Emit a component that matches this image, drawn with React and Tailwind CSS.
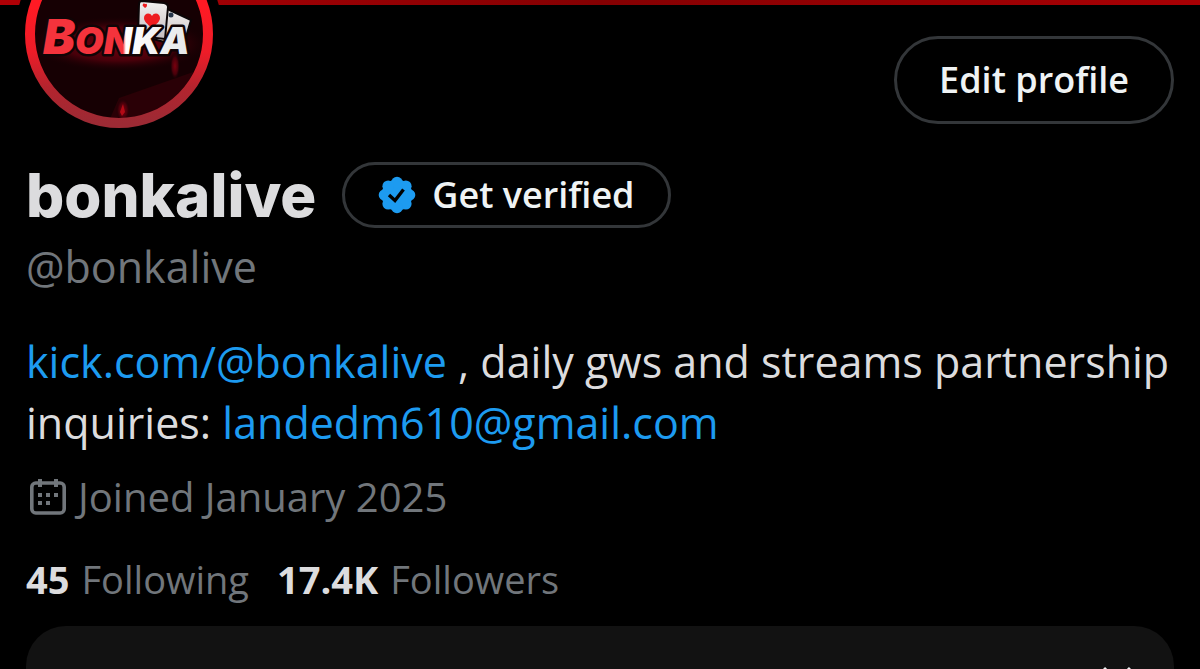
const profile = {
  name: 'bonkalive',
  handle: '@bonkalive',
  site: 'kick.com/@bonkalive',
  email: 'landedm610@gmail.com',
  joined: 'Joined January 2025',
}

const stats = [
  { label: 'Following', value: '45' },
  { label: 'Followers', value: '17.4K' },
]

function Avatar() {
  return (
    <svg viewBox="0 0 208 208" className="w-52 h-52 shrink-0" role="img" aria-label="Bonka">
      <defs>
        <linearGradient id="ring" x1="0" y1="0" x2="0" y2="1">
          <stop offset="0.35" stopColor="#ff1a24" />
          <stop offset="0.6" stopColor="#ee1c28" />
          <stop offset="0.8" stopColor="#b3242e" />
          <stop offset="1" stopColor="#9c2a34" />
        </linearGradient>
        <radialGradient id="glow" cx="0.5" cy="0.5" r="0.5">
          <stop offset="0" stopColor="#7a000e" />
          <stop offset="0.6" stopColor="#48000a" />
          <stop offset="1" stopColor="#140003" stopOpacity="0" />
        </radialGradient>
        <linearGradient id="logo" gradientUnits="userSpaceOnUse" x1="28" y1="0" x2="176" y2="0">
          <stop offset="0" stopColor="#f4333c" />
          <stop offset="0.54" stopColor="#f4333c" />
          <stop offset="0.56" stopColor="#ffffff" />
          <stop offset="1" stopColor="#e4e6e8" />
        </linearGradient>
        <linearGradient id="card" x1="0" y1="0" x2="0" y2="1">
          <stop offset="0" stopColor="#f3f1f1" />
          <stop offset="1" stopColor="#c4bcbe" />
        </linearGradient>
        <clipPath id="face">
          <circle cx="104" cy="104" r="85" />
        </clipPath>
      </defs>
      <circle cx="104" cy="104" r="104" fill="#000" />
      <g clipPath="url(#face)">
        <rect width="208" height="208" fill="#160003" />
        <path d="M104 168l80-28v60H90z" fill="#2a0006" />
        <ellipse cx="104" cy="114" rx="92" ry="28" fill="url(#glow)" />
        <ellipse cx="108" cy="180" rx="7" ry="12" fill="url(#glow)" />
        <ellipse cx="160" cy="136" rx="5" ry="14" fill="url(#glow)" />
        <path d="M108 174l2 8-3 4-2-4z" fill="#b30a16" />
      </g>
      <circle cx="104" cy="104" r="89" fill="none" stroke="url(#ring)" strokeWidth="10" />
      <g stroke="#0b0507" strokeWidth="2">
        <path d="M148 77l28 13-8 27-30-8z" fill="url(#card)" />
        <path d="M127 71l22 2q4 1 4 4l-3 32-27-3 1-32q0-3 3-3z" fill="url(#card)" />
      </g>
      <path d="M137 98c-5-4-8-7-8-10 0-5 6-6 8-2 2-4 8-3 8 2 0 3-3 6-8 10z" fill="#ee1c20" />
      <path d="M130 78c-2-2-3-2-2-4 1-1 2 0 2 0s2-1 2 1-1 2-2 3z" fill="#ee1c20" />
      <circle cx="156" cy="85" r="2.5" fill="#26364a" />
      <text
        x="28"
        y="124"
        fill="url(#logo)"
        stroke="#100406"
        strokeWidth="5"
        strokeLinejoin="round"
        paintOrder="stroke"
        className="font-[Inter,sans-serif] font-black italic"
      >
        <tspan className="text-[48px]">B</tspan>
        <tspan className="text-[37px]">ONKA</tspan>
      </text>
    </svg>
  )
}

function VerifiedBadge() {
  return (
    <svg viewBox="0 0 38 38" className="w-[38px] h-[38px]" aria-hidden="true">
      <g fill="#1d9bf0">
        <circle cx="19" cy="19" r="15.4" />
        <circle cx="19" cy="6.5" r="5.8" />
        <circle cx="27.8" cy="10.2" r="5.8" />
        <circle cx="31.5" cy="19" r="5.8" />
        <circle cx="27.8" cy="27.8" r="5.8" />
        <circle cx="19" cy="31.5" r="5.8" />
        <circle cx="10.2" cy="27.8" r="5.8" />
        <circle cx="6.5" cy="19" r="5.8" />
        <circle cx="10.2" cy="10.2" r="5.8" />
      </g>
      <path d="M11 19l6 5.5 8.5-11" fill="none" stroke="#000" strokeWidth="3.4" />
    </svg>
  )
}

function CalendarIcon() {
  return (
    <svg viewBox="0 0 36 36" className="w-9 h-9" fill="#71767b" aria-hidden="true">
      <rect x="1.8" y="4" width="32.4" height="30" rx="4" fill="none" stroke="#71767b" strokeWidth="3.6" />
      <path d="M8 0h4v8H8zM24 0h4v8h-4z" />
      <path d="M8 14h4v4H8zM16 14h4v4h-4zM24 14h4v4h-4zM8 22h4v4H8zM16 22h4v4h-4z" />
    </svg>
  )
}

function CloseIcon() {
  return (
    <svg viewBox="0 0 30 30" className="w-[30px] h-[30px]" fill="none" stroke="#eff3f4" strokeWidth="3" aria-hidden="true">
      <path d="M2 2l26 26M28 2L2 28" />
    </svg>
  )
}

export default function App() {
  return (
    <main className="h-screen overflow-hidden bg-black font-['Open_Sans',sans-serif] text-[#dcdcde]">
      <div className="h-[5px] bg-linear-to-r from-[#b00006] via-[#840002] to-[#a80004]" />

      <header className="flex items-start justify-between pl-[15px] pr-[26px]">
        <div className="relative -mt-[75px]">
          <Avatar />
        </div>
        <button
          type="button"
          className="mt-[31px] h-[88px] px-[42px] rounded-full border-[3px] border-[#333639] text-[36px] leading-none font-semibold text-[#eff3f4]"
        >
          Edit profile
        </button>
      </header>

      <section className="px-[26px] pt-6">
        <div className="flex items-center gap-[26px]">
          <h1 className="font-[Inter,sans-serif] text-[60px] leading-[66px] font-extrabold">{profile.name}</h1>
          <button
            type="button"
            className="flex items-center gap-4 h-[66px] px-[33px] rounded-full border-[3px] border-[#333639] text-[36px] leading-none font-semibold text-[#eff3f4]"
          >
            <VerifiedBadge />
            Get verified
          </button>
        </div>
        <p className="mt-[11px] text-[43px] leading-[56px] text-[#71767b]">{profile.handle}</p>

        <p className="mt-9 text-[43px] leading-[61px]">
          <a href="https://kick.com/@bonkalive" className="text-[#1d9bf0]">{profile.site}</a>
          <span> , daily gws and streams partnership </span>
          <span>inquiries: </span>
          <a href="mailto:landedm610@gmail.com" className="text-[#1d9bf0]">{profile.email}</a>
        </p>

        <p className="mt-4 flex items-center gap-3 pl-1 text-[40px] leading-[56px] text-[#71767b]">
          <CalendarIcon />
          {profile.joined}
        </p>

        <div className="mt-[26px] flex gap-7 text-[38px] leading-[56px]">
          {stats.map((stat) => (
            <a key={stat.label} href="#" className="flex gap-3 text-[#71767b]">
              <span className="font-bold text-[#dcdcde]">{stat.value}</span>
              {stat.label}
            </a>
          ))}
        </div>

        <div className="mt-[19px] flex h-40 justify-end rounded-[40px] bg-[#121212] px-[42px] pt-10">
          <button type="button" aria-label="Close" className="self-start">
            <CloseIcon />
          </button>
        </div>
      </section>
    </main>
  )
}
